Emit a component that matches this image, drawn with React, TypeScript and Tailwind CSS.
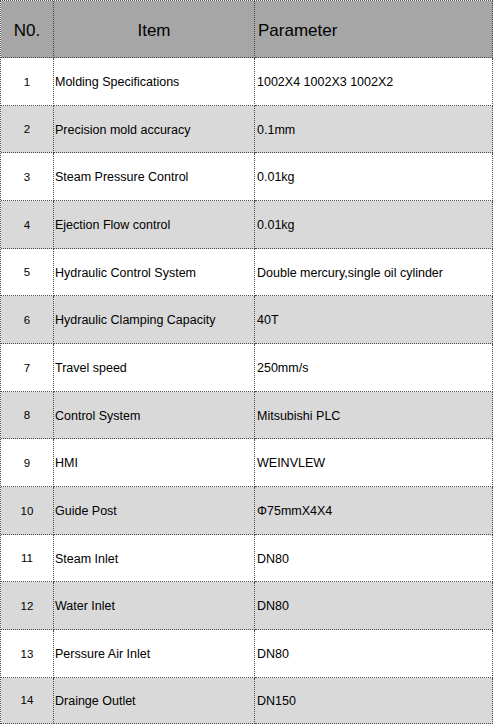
import React from "react";

const rows: [string, string, string][] = [
  ["1", "Molding Specifications", "1002X4 1002X3 1002X2"],
  ["2", "Precision mold accuracy", "0.1mm"],
  ["3", "Steam Pressure Control", "0.01kg"],
  ["4", "Ejection Flow control", "0.01kg"],
  ["5", "Hydraulic Control System", "Double mercury,single oil cylinder"],
  ["6", "Hydraulic Clamping Capacity", "40T"],
  ["7", "Travel speed", "250mm/s"],
  ["8", "Control System", "Mitsubishi PLC"],
  ["9", "HMI", "WEINVLEW"],
  ["10", "Guide Post", "Φ75mmX4X4"],
  ["11", "Steam Inlet", "DN80"],
  ["12", "Water Inlet", "DN80"],
  ["13", "Perssure Air Inlet", "DN80"],
  ["14", "Drainge Outlet", "DN150"],
];

export default function App() {
  return (
    <div className="w-[495px] h-[725px] bg-white" style={{ fontFamily: '"Liberation Sans", Arial, sans-serif' }}>
      <div className="grid grid-cols-[53px_201px_238px] w-[493px] border-l border-t border-dotted border-[#4a4a4a] text-black">
        <div className="h-[57px] pt-[3px] bg-[#a6a6a6] border-r border-b border-dotted border-[#4a4a4a] flex items-center justify-center text-[17px]">N0.</div>
        <div className="h-[57px] pt-[3px] bg-[#a6a6a6] border-r border-b border-dotted border-[#4a4a4a] flex items-center justify-center text-[17px]">Item</div>
        <div className="h-[57px] pt-[3px] bg-[#a6a6a6] border-r border-b border-dotted border-[#4a4a4a] flex items-center pl-[3px] text-[17px]">Parameter</div>
        {rows.map((r, i) => {
          const bg = i % 2 === 1 ? "bg-[#d9d9d9]" : "bg-white";
          const h = i === 13 ? "h-[46px]" : "h-[47.67px]";
          return (
            <React.Fragment key={r[0]}>
              <div className={`${bg} ${h} pt-[2px] border-r border-b border-dotted border-[#4a4a4a] flex items-center justify-center text-[11.5px]`}>{r[0]}</div>
              <div className={`${bg} ${h} pt-[2px] border-r border-b border-dotted border-[#4a4a4a] flex items-center pl-[1px] text-[12.5px]`}>{r[1]}</div>
              <div className={`${bg} ${h} pt-[2px] border-r border-b border-dotted border-[#4a4a4a] flex items-center pl-[2px] text-[12.5px]`}>{r[2]}</div>
            </React.Fragment>
          );
        })}
      </div>
    </div>
  );
}
